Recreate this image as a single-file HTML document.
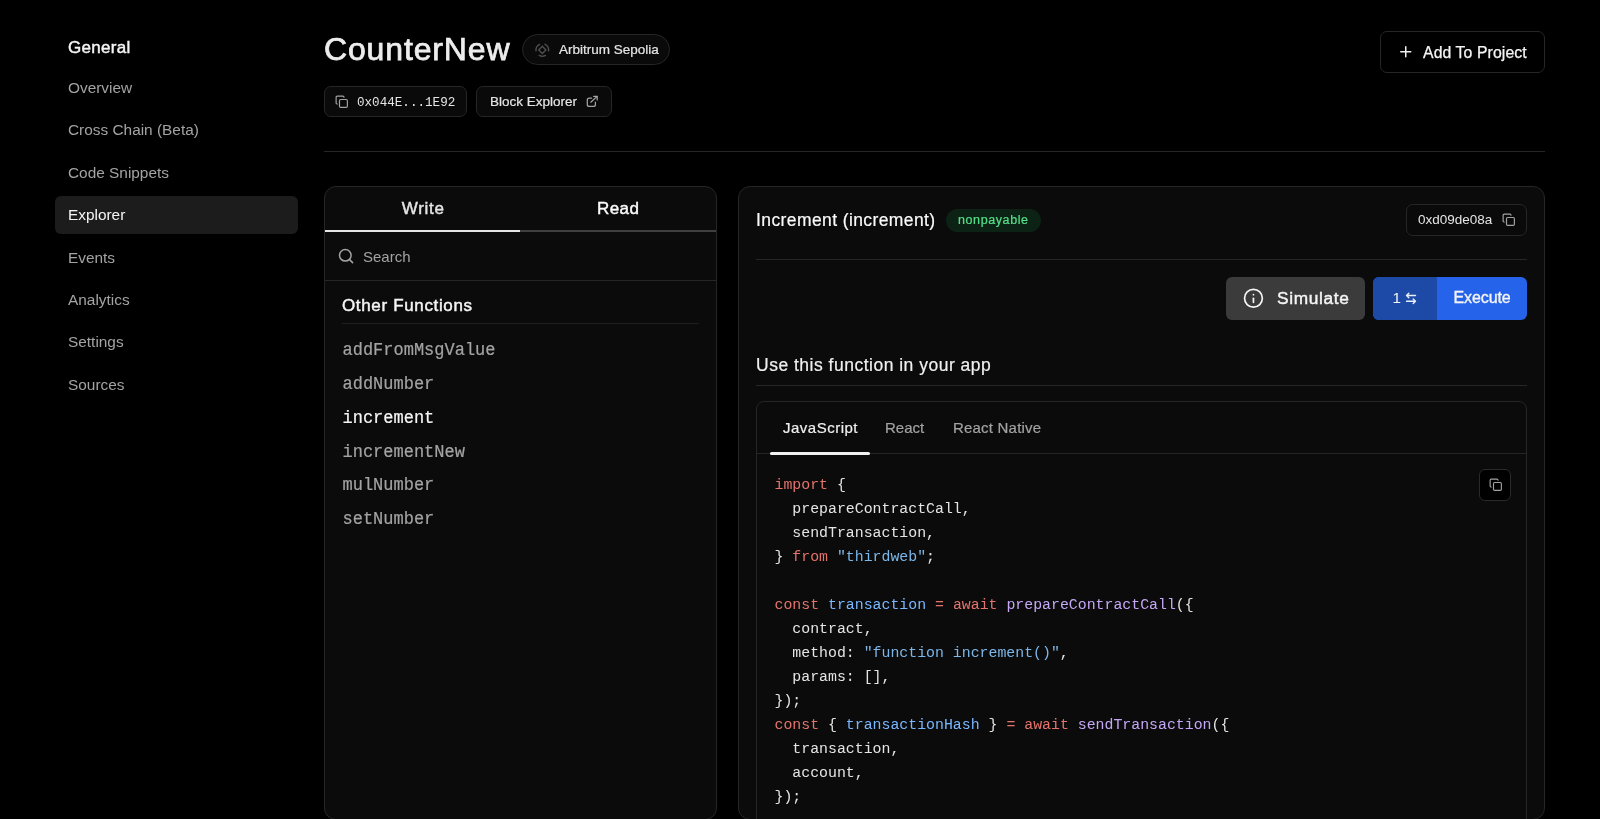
<!DOCTYPE html>
<html><head><meta charset="utf-8">
<style>
*{box-sizing:border-box;margin:0;padding:0}
html,body{width:1600px;height:819px;overflow:hidden;background:#000;color:#e5e5e5;font-family:"Liberation Sans",sans-serif}
.abs{position:absolute}
.t{position:absolute;white-space:pre;line-height:1}
.mono{font-family:"Liberation Mono",monospace}
.nav{font-size:15.4px;color:#a3a3a3}
.pill{position:absolute;border:1px solid #262626;background:#0a0a0a}
.panel{position:absolute;border:1px solid #262626;background:#0b0b0b;border-radius:12px}
.hl{position:absolute;height:1px;background:#262626}
svg{position:absolute;overflow:visible}
.fn{position:absolute;white-space:pre;line-height:1;font-family:"Liberation Mono",monospace;font-size:17px;color:#a3a3a3;left:342.5px;-webkit-text-stroke:0.2px currentColor;transform:scaleY(1.06);transform-origin:0 13px}
.code{position:absolute;left:774.5px;top:472.5px;font-family:"Liberation Mono",monospace;font-size:14.86px;line-height:24px;color:#e5e5e5;white-space:pre}
.k{color:#e5736b}.v{color:#79b8ff}.f{color:#c4a7f5}.s{color:#7cb7ea}
.wrap{position:absolute;left:0;top:0;width:1600px;height:819px;will-change:transform}
</style></head><body><div class="wrap">
<!-- sidebar -->
<div class="t" style="left:68px;top:39px;font-size:17px;letter-spacing:0.3px;-webkit-text-stroke:0.45px #f5f5f5;color:#f5f5f5">General</div>
<div class="t nav" style="left:68px;top:80px">Overview</div>
<div class="t nav" style="left:68px;top:122px">Cross Chain (Beta)</div>
<div class="t nav" style="left:68px;top:165px">Code Snippets</div>
<div class="abs" style="left:55px;top:196px;width:243px;height:38px;background:#1c1c1c;border-radius:6px"></div>
<div class="t nav" style="left:68px;top:207px;color:#f5f5f5">Explorer</div>
<div class="t nav" style="left:68px;top:250px">Events</div>
<div class="t nav" style="left:68px;top:292px">Analytics</div>
<div class="t nav" style="left:68px;top:334px">Settings</div>
<div class="t nav" style="left:68px;top:377px">Sources</div>

<!-- header -->
<div class="t" style="left:324px;top:33px;font-size:32px;letter-spacing:0.85px;-webkit-text-stroke:0.75px #ededed;color:#ededed">CounterNew</div>
<div class="pill" style="left:522px;top:34px;width:148px;height:31px;border-radius:16px"></div>
<svg style="left:535px;top:43px" width="15" height="14" viewBox="0 0 15 14"><g fill="none" stroke="#4f4f4f" stroke-width="1.35" stroke-linecap="round"><path d="M7.3 3.3 L10.9 6.9 L7.3 10.5 L3.7 6.9 Z"/><path d="M10.45 12.456 A6.3 6.3 0 0 1 4.15 12.456"/><path d="M1.061 7.877 A6.3 6.3 0 0 1 4.637 1.29"/><path d="M9.963 1.29 A6.3 6.3 0 0 1 13.539 7.877"/></g></svg>
<div class="t" style="left:559px;top:43px;font-size:13.5px;-webkit-text-stroke:0.2px #e5e5e5;color:#e5e5e5">Arbitrum Sepolia</div>

<div class="pill" style="left:324px;top:86px;width:143px;height:31px;border-radius:7px"></div>
<svg style="left:335.2px;top:94.8px" width="13.5" height="13.5" viewBox="0 0 24 24"><g fill="none" stroke="#a3a3a3" stroke-width="2.1" stroke-linecap="round" stroke-linejoin="round"><rect x="8" y="8" width="14" height="14" rx="2"/><path d="M4 16c-1.1 0-2-.9-2-2V4c0-1.1.9-2 2-2h10c1.1 0 2 .9 2 2"/></g></svg>
<div class="t mono" style="left:357px;top:97px;font-size:12.6px;color:#e5e5e5">0x044E...1E92</div>
<div class="pill" style="left:476px;top:86px;width:136px;height:31px;border-radius:7px"></div>
<div class="t" style="left:490px;top:95px;font-size:13.5px;-webkit-text-stroke:0.2px #e5e5e5;color:#e5e5e5">Block Explorer</div>
<svg style="left:580px;top:90px" width="20" height="20" viewBox="580 90 20 20"><g fill="none" stroke="#a3a3a3" stroke-width="1.25" stroke-linecap="round" stroke-linejoin="round"><path d="M591.6 98.2H589.3a2 2 0 0 0-2 2V104.4a2 2 0 0 0 2 2H593.4a2 2 0 0 0 2-2V102.2"/><path d="M590.8 102.2L597.1 96.4"/><path d="M593.6 96.3H597.2V99.9"/></g></svg>

<div class="pill" style="left:1379.5px;top:30.8px;width:165.5px;height:42px;border-radius:7px;background:#000"></div>
<svg style="left:1400px;top:46px" width="12" height="12" viewBox="0 0 12 12"><path d="M0.75 5.75h10M5.75 0.75v10" stroke="#f0f0f0" stroke-width="1.5" stroke-linecap="round"/></svg>
<div class="t" style="left:1423px;top:45px;font-size:15.8px;letter-spacing:0.1px;-webkit-text-stroke:0.25px #f5f5f5;color:#f5f5f5">Add To Project</div>

<div class="hl" style="left:324px;top:151px;width:1221px"></div>

<!-- left panel -->
<div class="panel" style="left:324px;top:186px;width:393px;height:634px"></div>
<div class="t" style="left:401.8px;top:200px;font-size:17px;letter-spacing:0.7px;-webkit-text-stroke:0.45px #e5e5e5;color:#e5e5e5">Write</div>
<div class="t" style="left:597px;top:200px;font-size:17px;letter-spacing:0.4px;-webkit-text-stroke:0.45px #fafafa;color:#fafafa">Read</div>
<div class="abs" style="left:325px;top:230px;width:195px;height:2px;background:#e5e5e5"></div>
<div class="abs" style="left:520px;top:230px;width:196px;height:2px;background:#3f3f3f"></div>
<svg style="left:338px;top:248px" width="16" height="16" viewBox="0 0 16 16"><g fill="none" stroke="#a3a3a3" stroke-width="1.5" stroke-linecap="round"><circle cx="7.3" cy="7.3" r="5.8"/><path d="M11.6 11.6 L14.6 14.6"/></g></svg>
<div class="t" style="left:363px;top:249px;font-size:15px;color:#a3a3a3">Search</div>
<div class="hl" style="left:325px;top:280px;width:391px"></div>
<div class="t" style="left:342px;top:297.2px;font-size:17px;letter-spacing:0.65px;-webkit-text-stroke:0.45px #f5f5f5;color:#f5f5f5">Other Functions</div>
<div class="hl" style="left:342px;top:323px;width:357px;background:#1f1f1f"></div>
<div class="fn" style="top:341.7px">addFromMsgValue</div>
<div class="fn" style="top:375.7px">addNumber</div>
<div class="fn" style="top:409.7px;color:#f5f5f5">increment</div>
<div class="fn" style="top:443.5px">incrementNew</div>
<div class="fn" style="top:477.2px">mulNumber</div>
<div class="fn" style="top:511px">setNumber</div>

<!-- right panel -->
<div class="panel" style="left:738px;top:186px;width:807px;height:634px"></div>
<div class="t" style="left:756px;top:212px;font-size:17.5px;letter-spacing:0.4px;-webkit-text-stroke:0.2px #fafafa;color:#fafafa">Increment (increment)</div>
<div class="abs" style="left:946px;top:209px;width:95px;height:23px;border-radius:12px;background:#0c2215"></div>
<div class="t" style="left:958px;top:214px;font-size:12.5px;letter-spacing:0.6px;-webkit-text-stroke:0.2px #55e089;color:#55e089">nonpayable</div>
<div class="pill" style="left:1406px;top:204px;width:121px;height:32px;border-radius:7px"></div>
<div class="t" style="left:1418px;top:213px;font-size:13.5px;color:#e5e5e5">0xd09de08a</div>
<svg style="left:1502.3px;top:213.2px" width="13.5" height="13.5" viewBox="0 0 24 24"><g fill="none" stroke="#a3a3a3" stroke-width="2.1" stroke-linecap="round" stroke-linejoin="round"><rect x="8" y="8" width="14" height="14" rx="2"/><path d="M4 16c-1.1 0-2-.9-2-2V4c0-1.1.9-2 2-2h10c1.1 0 2 .9 2 2"/></g></svg>
<div class="hl" style="left:756px;top:259px;width:771px"></div>

<div class="abs" style="left:1226px;top:277px;width:138.7px;height:43px;border-radius:6px;background:#3b3b3b"></div>
<svg style="left:1243px;top:288px" width="21" height="21" viewBox="0 0 21 21"><g fill="none" stroke="#f5f5f5" stroke-width="1.7" stroke-linecap="round"><circle cx="10.45" cy="10.25" r="8.9"/><path d="M10.45 10.3v4"/><path d="M10.45 6.65h.01"/></g></svg>
<div class="t" style="left:1277px;top:290px;font-size:17.3px;letter-spacing:0.65px;-webkit-text-stroke:0.45px #f5f5f5;color:#f5f5f5">Simulate</div>
<div class="abs" style="left:1373px;top:277px;width:154px;height:43px;border-radius:6px;background:#2563eb;overflow:hidden"><div class="abs" style="left:0;top:0;width:64px;height:43px;background:#1d4aa7"></div></div>
<div class="t" style="left:1392.5px;top:290px;font-size:15.2px;color:#f5f5f5">1</div>
<svg style="left:1405px;top:292px" width="12" height="13" viewBox="0 0 12 13"><g fill="none" stroke="#e8f0ff" stroke-width="1.4" stroke-linecap="round" stroke-linejoin="round"><path d="M10.5 3.5H1.5M3.8 1.2 1.5 3.5 3.8 5.8"/><path d="M1.5 9.3h9M8.2 7 10.5 9.3 8.2 11.6"/></g></svg>
<div class="t" style="left:1453.5px;top:290.4px;font-size:16px;letter-spacing:-0.1px;-webkit-text-stroke:0.35px #f5f5f5;color:#f5f5f5">Execute</div>

<div class="t" style="left:756px;top:357px;font-size:17.5px;letter-spacing:0.5px;-webkit-text-stroke:0.2px #f0f0f0;color:#f0f0f0">Use this function in your app</div>
<div class="hl" style="left:756px;top:385px;width:771px"></div>

<div class="abs" style="left:756px;top:401px;width:771px;height:440px;border:1px solid #262626;border-radius:8px;background:#0b0b0b"></div>
<div class="t" style="left:783px;top:420px;font-size:15px;letter-spacing:0.5px;-webkit-text-stroke:0.2px #f0f0f0;color:#f0f0f0">JavaScript</div>
<div class="t" style="left:885px;top:420px;font-size:15px;-webkit-text-stroke:0.2px #a3a3a3;color:#a3a3a3">React</div>
<div class="t" style="left:953px;top:420px;font-size:15px;letter-spacing:0.2px;-webkit-text-stroke:0.2px #a3a3a3;color:#a3a3a3">React Native</div>
<div class="hl" style="left:757px;top:453px;width:769px"></div>
<div class="abs" style="left:770px;top:452px;width:100px;height:3px;border-radius:2px;background:#f0f0f0"></div>
<div class="abs" style="left:1479px;top:469px;width:32px;height:32px;border:1px solid #2a2a2a;border-radius:6px;background:#000"></div>
<svg style="left:1488.6px;top:478.4px" width="13.5" height="13.5" viewBox="0 0 24 24"><g fill="none" stroke="#a3a3a3" stroke-width="2" stroke-linecap="round" stroke-linejoin="round"><rect x="8" y="8" width="14" height="14" rx="2"/><path d="M4 16c-1.1 0-2-.9-2-2V4c0-1.1.9-2 2-2h10c1.1 0 2 .9 2 2"/></g></svg>

<div class="code"><span class="k">import</span> {
  prepareContractCall,
  sendTransaction,
} <span class="k">from</span> <span class="s">"thirdweb"</span>;

<span class="k">const</span> <span class="v">transaction</span> <span class="k">=</span> <span class="k">await</span> <span class="f">prepareContractCall</span>({
  contract,
  method: <span class="s">"function increment()"</span>,
  params: [],
});
<span class="k">const</span> { <span class="v">transactionHash</span> } <span class="k">=</span> <span class="k">await</span> <span class="f">sendTransaction</span>({
  transaction,
  account,
});</div>

</div></body></html>
